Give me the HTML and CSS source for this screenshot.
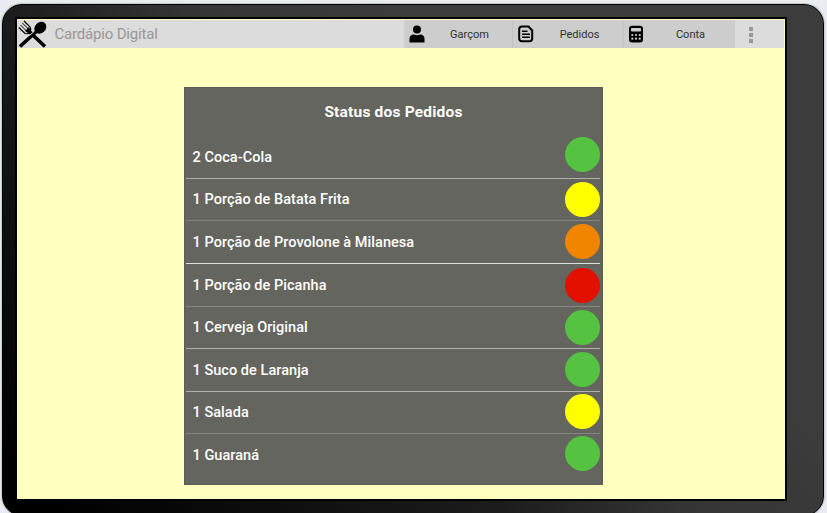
FILE: index.html
```html
<!DOCTYPE html>
<html lang="pt-BR">
<head>
<meta charset="utf-8">
<title>Cardápio Digital</title>
<link rel="stylesheet" href="styles.css">
</head>
<body>
<div class="tablet">
  <div class="screen">
    <header class="bar">
      <svg class="logo" width="29" height="28" viewBox="0 0 29 28">
        <path d="M27 26.500 9 9.500M2 26.500 20 10" stroke="#000" stroke-width="3.600" fill="none"/>
        <path d="M11.500 15.500 16.500 11" stroke="#dcdcdc" stroke-width="1"/>
        <path d="M.8 7.500 7 13.500Q11 14.500 12.500 11.500Q13.500 9 12 7L6 1" fill="none" stroke="#000" stroke-width="1.200"/>
        <path d="M2.500 5 9 11.500M4.300 3 11 9.500" stroke="#000" stroke-width="1"/>
        <path d="M7 11 11 7 13 11 10 13Z"/>
        <ellipse cx="22.300" cy="7.700" rx="6.500" ry="5.400" transform="rotate(-45 22.300 7.700)"/>
      </svg>
      <h1 class="brand">Cardápio Digital</h1>
      <nav class="actions">
        <a class="action action-waiter">
          <svg class="icon" width="16" height="18" viewBox="0 0 16 18"><circle cx="8" cy="4.500" r="4"/><path d="M.5 17.500V14Q.5 9.500 5 9.500Q8 10.800 11 9.500Q15.500 9.500 15.500 14V17.500Z"/></svg>
          <span class="label">Garçom</span>
        </a>
        <a class="action action-orders">
          <svg class="icon" width="16" height="18" viewBox="0 0 16 18"><path d="M4 1.500H10.500L14.200 5.500V13.500Q14.200 16.200 11.500 16.200H4Q1.200 16.200 1.200 13.500V4.500Q1.200 1.500 4 1.500Z" fill="none" stroke="#000" stroke-width="2"/><path d="M4 6.300H9.500M4 9.300H12M4 12.300H12" stroke="#000" stroke-width="1.600"/></svg>
          <span class="label">Pedidos</span>
        </a>
        <a class="action action-bill">
          <svg class="icon" width="16" height="18" viewBox="0 0 16 18"><rect x="1" y=".8" width="14" height="16.700" rx="3"/><g fill="#cdcdcd"><rect x="3" y="3" width="10" height="3.500" rx=".8"/><circle cx="4.300" cy="10" r="1.100"/><circle cx="8" cy="10" r="1.100"/><circle cx="11.700" cy="10" r="1.100"/><circle cx="4.300" cy="13.700" r="1.100"/><circle cx="8" cy="13.700" r="1.100"/><circle cx="11.700" cy="13.700" r="1.100"/></g></svg>
          <span class="label">Conta</span>
        </a>
      </nav>
      <div class="more"><i></i><i></i><i></i></div>
    </header>
    <main class="panel">
      <h2 class="title">Status dos Pedidos</h2>
      <ul class="orders">
        <li><span>2 Coca-Cola</span><b class="dot green up-3"></b></li>
        <li class="dim"><span>1 Porção de Batata Frita</span><b class="dot yellow"></b></li>
        <li class="bright"><span>1 Porção de Provolone à Milanesa</span><b class="dot orange up-1"></b></li>
        <li class="dim"><span>1 Porção de Picanha</span><b class="dot red"></b></li>
        <li><span>1 Cerveja Original</span><b class="dot green"></b></li>
        <li><span>1 Suco de Laranja</span><b class="dot green up-1"></b></li>
        <li class="dim"><span>1 Salada</span><b class="dot yellow up-1"></b></li>
        <li><span>1 Guaraná</span><b class="dot green up-2"></b></li>
      </ul>
    </main>
  </div>
</div>
</body>
</html>
```
FILE: styles.css
```css
* { box-sizing: border-box; }

body {
  margin: 0;
  height: 513px;
  padding: 4px 3px 0 2px;
  overflow: hidden;
  background: #e9edf1;
  font-family: Roboto, sans-serif;
}

.tablet {
  height: 512px;
  padding: 13px 36px 0 13px;
  border: 1px solid #000;
  border-radius: 20px;
  background: linear-gradient(45deg, #000 4%, #060606 12%, #1c1c1c 38%, #353535 52%, #3c3c3c 68%);
  box-shadow: 0 0 2px rgba(0, 0, 0, .5);
}

.screen {
  width: 772px;
  height: 484px;
  margin-left: -1px;
  margin-top: -1px;
  border: 2px solid #000;
  border-radius: 1px;
  padding-top: 1px;
  background: #ffffc0;
}

.bar {
  display: flex;
  width: 767px;
  height: 28px;
  background: #dcdcdc;
}

.logo { margin-left: .5px; }

.brand {
  width: 357.500px;
  margin: 0 0 0 8px;
  font-size: 15px;
  font-weight: 400;
  line-height: 29px;
  letter-spacing: -.18px;
  color: #989898;
}

.actions { display: flex; margin-left: -8px; }

.action {
  display: flex;
  align-items: center;
  width: 108px;
  background: #cdcdcd;
  border-left: 1px solid #c3c3c3;
}

.action:first-child { border-left-color: #d2d2d2; }
.action-orders { width: 111px; }
.action-bill { width: 112px; }

.icon { margin-left: 4px; flex: none; }
.action-orders .icon { margin-left: 5px; }

.label {
  flex: 1;
  padding-left: 2px;
  text-align: center;
  font-size: 11px;
  color: #303030;
}

.more {
  display: flex;
  flex-direction: column;
  gap: 2px;
  margin: 7px 0 0 14px;
}

.more i { width: 4px; height: 4px; background: #989898; }

.panel {
  width: 419px;
  height: 398px;
  margin: 39px 0 0 167px;
  border: 1px solid #5b5c55;
  background: #64655e;
  color: #fff;
}

.title {
  height: 48px;
  margin: 0;
  text-align: center;
  font-size: 15.500px;
  font-weight: 700;
  line-height: 49px;
  letter-spacing: .2px;
}

.orders {
  display: grid;
  grid-template-rows: 43px 42px 43px 43px 42px 43px 42px 43px;
  width: 414px;
  margin: 0 0 0 1px;
  padding: 0;
  list-style: none;
  font-size: 14.500px;
  font-weight: 500;
  letter-spacing: .04px;
}

.orders li {
  display: flex;
  align-items: center;
  justify-content: space-between;
  padding-left: 6.500px;
  border-bottom: 1px solid #b0b1ad;
}

.orders .dim { border-color: #85867f; }
.orders .bright { border-color: #dedfdb; }
.orders li:last-child { border-color: transparent; }

.dot { width: 35px; height: 35px; border-radius: 50%; }
.up-1 { margin-bottom: 2px; }
.up-2 { margin-bottom: 3px; }
.up-3 { margin-bottom: 6px; }
.green { background: #55c242; }
.yellow { background: #ff0; }
.orange { background: #f28500; }
.red { background: #e31000; }
```
